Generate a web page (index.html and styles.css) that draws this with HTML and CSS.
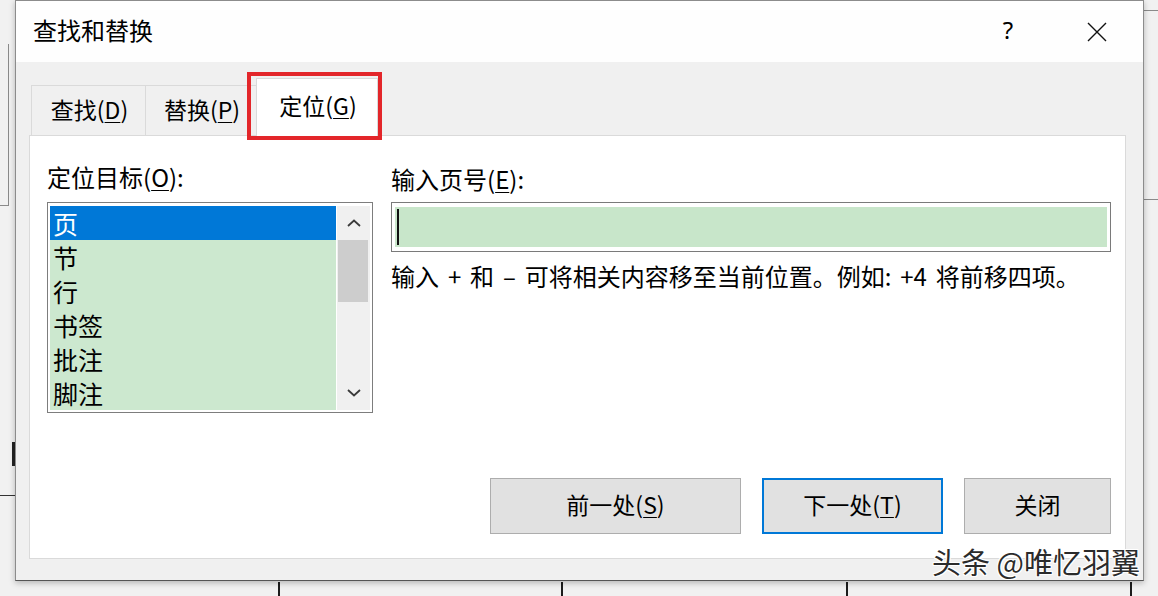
FILE: index.html
```html
<!DOCTYPE html>
<html lang="zh-CN">

<head>
    <meta charset="UTF-8">
    <meta name="viewport" content="width=device-width, initial-scale=1.0">
    <title>查找和替换</title>
    <link rel="stylesheet" href="styles.css">
</head>

<body>
    <!-- document lines peeking out behind the dialog -->
    <div class="desk">
        <span class="doc-line left-edge"></span>
        <span class="doc-line left-foot"></span>
        <span class="doc-line left-mark"></span>
        <span class="doc-line left-rule"></span>
        <span class="doc-line right-rule top"></span>
        <span class="doc-line right-rule mid"></span>
        <span class="doc-line cell c1"></span>
        <span class="doc-line cell c2"></span>
        <span class="doc-line cell c3"></span>
        <span class="doc-line cell c4"></span>
    </div>

    <div class="dialog">
        <div class="titlebar">
            <div class="title">查找和替换</div>
            <div class="caption-btn help">?</div>
            <div class="caption-btn close">
                <svg width="20" height="20" viewBox="0 0 20 20">
                    <path d="M1 1 L19 19 M19 1 L1 19" stroke="#111" stroke-width="1.4" fill="none" />
                </svg>
            </div>
        </div>

        <div class="dialog-body">
            <div class="tabs">
                <div class="tab first">查找(<u>D</u>)</div>
                <div class="tab second">替换(<u>P</u>)</div>
                <div class="tab active">定位(<u>G</u>)</div>
            </div>

            <div class="panel">
                <div class="fields">
                    <div class="target">
                        <div class="field-label">定位目标(<u>O</u>):</div>
                        <div class="listbox">
                            <ul class="list-items">
                                <li class="selected">页</li>
                                <li>节</li>
                                <li>行</li>
                                <li>书签</li>
                                <li>批注</li>
                                <li>脚注</li>
                            </ul>
                            <div class="scrollbar">
                                <div class="arrow">
                                    <svg width="16" height="10" viewBox="0 0 16 10">
                                        <path d="M2 8 L8 2.5 L14 8" stroke="#3a3a3a" stroke-width="1.8" fill="none" />
                                    </svg>
                                </div>
                                <div class="thumb"></div>
                                <div class="track"></div>
                                <div class="arrow">
                                    <svg width="16" height="10" viewBox="0 0 16 10">
                                        <path d="M2 2 L8 7.5 L14 2" stroke="#3a3a3a" stroke-width="1.8" fill="none" />
                                    </svg>
                                </div>
                            </div>
                        </div>
                    </div>

                    <div class="page-input">
                        <div class="field-label">输入页号(<u>E</u>):</div>
                        <div class="textbox">
                            <div class="textbox-fill"><span class="caret"></span></div>
                        </div>
                        <p class="hint">输入 + 和 – 可将相关内容移至当前位置。例如: +4 将前移四项。</p>
                    </div>
                </div>

                <div class="actions">
                    <button class="btn prev">前一处(<u>S</u>)</button>
                    <button class="btn next default">下一处(<u>T</u>)</button>
                    <button class="btn shut">关闭</button>
                </div>
            </div>
        </div>
    </div>

    <div class="watermark">头条 @唯忆羽翼</div>
</body>

</html>
```

FILE: styles.css
```css
body {
    font-family: "Noto Sans CJK SC", "Noto Sans", sans-serif;
    margin: 0;
    padding: 0 0 0 15px;
    background-color: #f1f1f1;
    color: #000;
    width: 1143px;
    height: 596px;
    overflow: hidden;
    position: relative;
}

u {
    text-decoration-thickness: 1px;
    text-underline-offset: 3px;
}

/* Background document lines */
.desk {
    position: absolute;
    left: 0;
    top: 0;
    width: 1158px;
    height: 596px;
}

.doc-line {
    position: absolute;
    display: block;
    background-color: #8a8a8a;
}

.left-edge {
    left: 8px;
    top: 44px;
    width: 1px;
    height: 162px;
}

.left-foot {
    left: 0;
    top: 205px;
    width: 9px;
    height: 1px;
}

.left-mark {
    left: 12px;
    top: 442px;
    width: 3px;
    height: 24px;
    background-color: #222;
}

.left-rule {
    left: 0;
    top: 495px;
    width: 15px;
    height: 1px;
    background-color: #333;
}

.right-rule {
    left: 1143px;
    width: 15px;
    height: 1px;
}

.right-rule.top {
    top: 10px;
}

.right-rule.mid {
    top: 199px;
}

.cell {
    top: 582px;
    width: 2px;
    height: 14px;
    background-color: #1c1c1c;
}

.c1 { left: 278px; }
.c2 { left: 561px; }
.c3 { left: 846px; }
.c4 { left: 1130px; }

/* Dialog window */
.dialog {
    position: relative;
    width: 1127px;
    height: 579px;
    border: 1px solid #8c8c8c;
    border-bottom-color: #555;
    background-color: #f0f0f0;
    box-shadow: 0 2px 6px rgba(0, 0, 0, 0.25);
    display: flex;
    flex-direction: column;
}

.titlebar {
    height: 61px;
    background-color: #fefefe;
    display: flex;
    align-items: center;
    padding: 0 11px 0 17px;
    gap: 19px;
}

.title {
    flex: 1;
    font-size: 24px;
    line-height: 30px;
    padding-bottom: 4px;
}

.caption-btn {
    width: 70px;
    height: 40px;
    display: flex;
    align-items: center;
    justify-content: center;
}

.help {
    font-family: "Noto Sans", sans-serif;
    font-size: 24px;
    padding-bottom: 4px;
}

.close svg {
    display: block;
}

.dialog-body {
    flex: 1;
    display: flex;
    flex-direction: column;
    padding: 0 17px 21px 13px;
}

/* Tabs */
.tabs {
    height: 73px;
    display: flex;
    align-items: flex-end;
    padding-left: 2px;
}

.tab {
    border-top: 1px solid #dadada;
    border-left: 1px solid #dadada;
    font-size: 23px;
    line-height: 30px;
    display: flex;
    align-items: center;
    justify-content: center;
    padding-bottom: 4px;
    box-sizing: border-box;
    height: 50px;
}

.tab.first {
    width: 114px;
    padding-left: 2px;
}

.tab.second {
    width: 111px;
    padding-left: 2px;
}

.tab.active {
    position: relative;
    width: 122px;
    height: 58px;
    margin-bottom: -1px;
    background-color: #fff;
    border: 1px solid #dadada;
    border-bottom: none;
    padding-left: 2px;
    padding-bottom: 6px;
    z-index: 1;
}

/* red highlight drawn over the selected tab */
.tab.active::after {
    content: "";
    position: absolute;
    left: -10px;
    top: -7px;
    right: -5px;
    bottom: -4px;
    border: 4px solid #e3262a;
}

/* Panel */
.panel {
    flex: 1;
    background-color: #fff;
    border: 1px solid #dadada;
    display: flex;
    flex-direction: column;
    padding: 27px 12px 24px 17px;
}

.fields {
    display: flex;
    gap: 18px;
}

.field-label {
    font-size: 24px;
    line-height: 28px;
    height: 28px;
    margin-bottom: 11px;
}

.target {
    width: 326px;
}

.listbox {
    border: 1px solid #7d7d7d;
    display: flex;
    padding: 3px 2px 2px 2px;
    height: 204px;
}

.list-items {
    flex: 1;
    list-style: none;
    margin: 0;
    padding: 0;
    background-color: #cce8cf;
}

.list-items li {
    height: 34px;
    line-height: 34px;
    font-size: 25px;
    padding-left: 3px;
}

.list-items li.selected {
    background-color: #0078d7;
    color: #fff;
}

.scrollbar {
    width: 33px;
    margin-left: 1px;
    background-color: #f0f0f0;
    display: flex;
    flex-direction: column;
}

.arrow {
    height: 34px;
    display: flex;
    align-items: center;
    justify-content: center;
}

.thumb {
    height: 62px;
    margin: 0 2px 0 1px;
    background-color: #cdcdcd;
}

.track {
    flex: 1;
}

.page-input {
    width: 720px;
}

.page-input .field-label {
    margin-top: 2px;
    margin-bottom: 9px;
}

.textbox {
    height: 40px;
    border: 1px solid #7a7a7a;
    padding: 4px 3px;
    background-color: #fff;
}

.textbox-fill {
    height: 100%;
    background-color: #c8e6ca;
    display: flex;
    align-items: center;
    padding-left: 2px;
}

.caret {
    width: 2px;
    height: 36px;
    background-color: #111;
}

.hint {
    margin: 10px 0 0;
    font-size: 24px;
    line-height: 28px;
    word-spacing: 3.5px;
    white-space: nowrap;
}

/* Buttons */
.actions {
    margin-top: auto;
    display: flex;
    justify-content: flex-end;
    gap: 21px;
    padding-right: 2px;
}

.btn {
    height: 56px;
    font-family: "Noto Sans CJK SC", sans-serif;
    font-size: 23px;
    color: #000;
    background-color: #e1e1e1;
    border: 1px solid #adadad;
    padding: 0 0 4px;
}

.btn.prev {
    width: 251px;
}

.btn.next {
    width: 181px;
}

.btn.shut {
    width: 147px;
}

.btn.default {
    border: 2px solid #0078d7;
}

/* Watermark stamped on the screenshot */
.watermark {
    position: absolute;
    right: 18px;
    top: 542px;
    font-size: 29px;
    line-height: 38px;
    color: #2b2b2b;
    text-shadow: 1px 1px 0 #fff, -1px -1px 0 #fff, 1px -1px 0 #fff, -1px 1px 0 #fff;
}
```
